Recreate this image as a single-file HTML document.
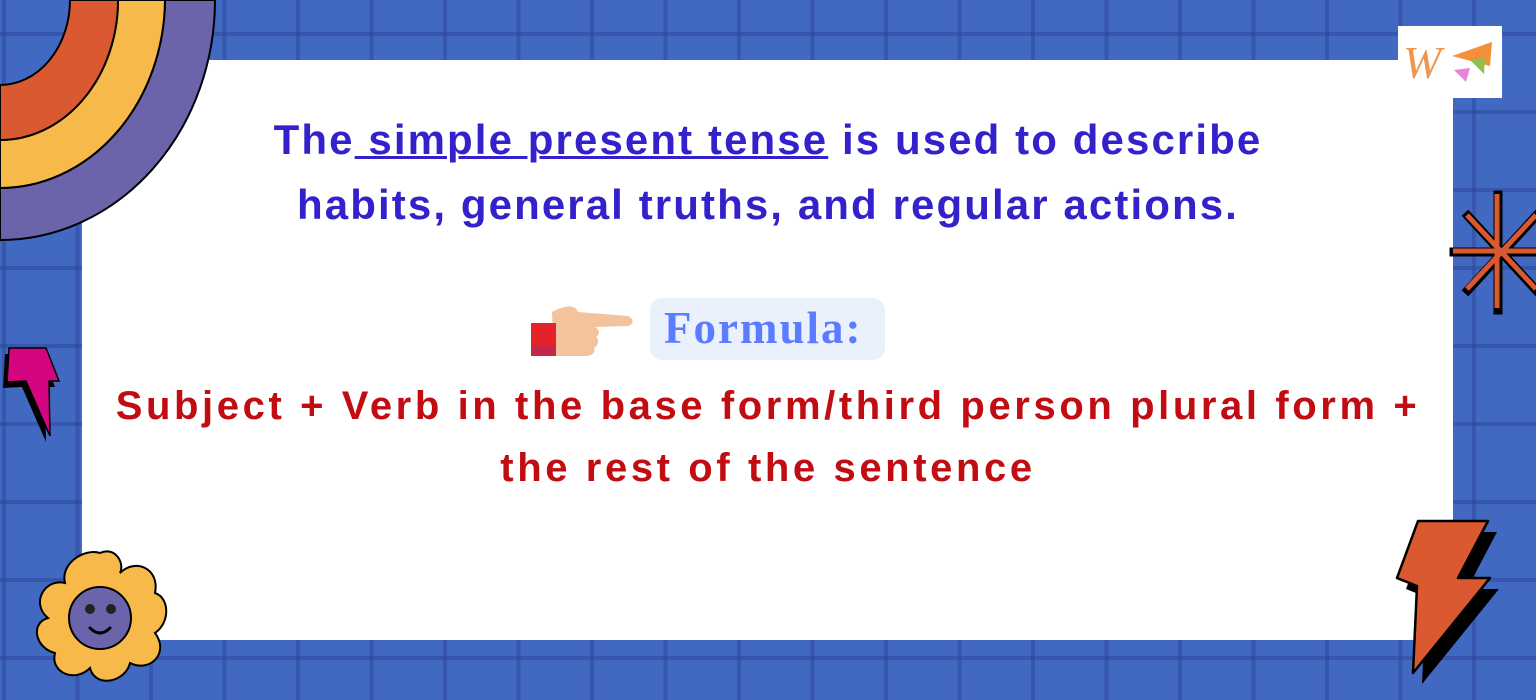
<!DOCTYPE html>
<html><head><meta charset="utf-8"><style>
html,body{margin:0;padding:0}
body{width:1536px;height:700px;position:relative;overflow:hidden;background:#4169c2;font-family:"Liberation Sans",sans-serif}
.grid{position:absolute;inset:0;background-image:linear-gradient(90deg,rgba(45,70,150,.5) 0 4px,transparent 4px),linear-gradient(rgba(45,70,150,.5) 0 4px,transparent 4px);background-size:73.5px 78px;background-position:2px 0,0 32px}
.card{position:absolute;left:82px;top:60px;width:1371px;height:580px;background:#fff}
.t{position:absolute;left:0;width:1536px;text-align:center;font-weight:bold;white-space:nowrap}
.blue{color:#3322cc;font-size:42px;letter-spacing:2.1px}
.red{color:#c10d12;font-size:40px;letter-spacing:3.6px}
</style></head><body>
<div class="grid"></div>
<div class="card"></div>
<svg style="position:absolute;left:0;top:0" width="230" height="245">
<path d="M0,240 A215,240 0 0 0 215,0 L165,0 A165,190 0 0 1 0,188Z" fill="#6c64aa" stroke="#000" stroke-width="2"/>
<path d="M0,188 A165,190 0 0 0 165,0 L118,0 A118,140 0 0 1 0,140Z" fill="#f6b94a" stroke="#000" stroke-width="2"/>
<path d="M0,140 A118,140 0 0 0 118,0 L70,0 A70,85 0 0 1 0,85Z" fill="#db5931" stroke="#000" stroke-width="2"/>
</svg>
<div style="position:absolute;left:1398px;top:26px;width:104px;height:72px;background:#fff"></div>
<div style="position:absolute;left:1403px;top:36px;font-family:'Liberation Serif',serif;font-style:italic;font-size:46px;color:#f0954a">W</div>
<svg style="position:absolute;left:1450px;top:38px" width="45" height="45"><path d="M2,18 L42,4 L40,28Z" fill="#f58f3a"/><path d="M20,22 L35,20 L34,36Z" fill="#8ec04f"/><path d="M4,32 L20,30 L16,44Z" fill="#e883d6"/></svg>
<svg style="position:absolute;left:1448px;top:190px" width="88" height="130">
<g stroke="#000" stroke-width="9" stroke-linecap="square"><line x1="50" y1="5" x2="50" y2="120"/><line x1="6" y1="62" x2="88" y2="62"/><line x1="20" y1="26" x2="88" y2="100"/><line x1="20" y1="100" x2="88" y2="26"/></g>
<g stroke="#db5931" stroke-width="5"><line x1="49" y1="4" x2="49" y2="118"/><line x1="5" y1="61" x2="88" y2="61"/><line x1="19" y1="25" x2="88" y2="99"/><line x1="19" y1="99" x2="88" y2="25"/></g>
</svg>
<svg style="position:absolute;left:0;top:0" width="1536" height="700">
<path d="M9,348 L46,348 L59,381 L49,381 L50,436 L26,381 L7,382Z" fill="#000" transform="translate(-4,6)"/>
<path d="M9,348 L46,348 L59,381 L49,381 L50,436 L26,381 L7,382Z" fill="#d3067f" stroke="#000" stroke-width="1.5"/>
<path d="M1418,521 L1488,521 L1458,578 L1490,578 L1413,673 L1417,586 L1397,578Z" fill="#000" transform="translate(9,11)"/>
<path d="M1418,521 L1488,521 L1458,578 L1490,578 L1413,673 L1417,586 L1397,578Z" fill="#db5931" stroke="#000" stroke-width="2.5" stroke-linejoin="round"/>
</svg>
<svg style="position:absolute;left:30px;top:548px" width="140" height="140">
<path d="M70,5 C85,-2 95,15 90,25 C105,10 130,20 125,45 C140,50 140,75 125,85 C140,105 120,125 100,115 C95,135 65,140 60,120 C45,135 20,125 25,105 C5,100 0,75 18,70 C0,55 15,30 35,35 C30,15 55,0 70,5Z" fill="#f6b94a" stroke="#000" stroke-width="2"/>
<circle cx="70" cy="70" r="31" fill="#6c64aa" stroke="#000" stroke-width="2"/>
<circle cx="60" cy="61" r="5" fill="#222"/><circle cx="81" cy="61" r="5" fill="#222"/>
<path d="M60,80 Q70,90 80,80" fill="none" stroke="#000" stroke-width="3" stroke-linecap="round"/>
</svg>
<div class="t blue" style="top:116px">The<span style="text-decoration:underline;text-decoration-thickness:3px"> simple present tense</span> is used to describe</div>
<div class="t blue" style="top:181px">habits, general truths, and regular actions.</div>
<svg style="position:absolute;left:530px;top:302px" width="105" height="55">
<path d="M22,10 C35,3 45,2 48,10 L98,14 C104,16 104,23 98,24 L65,25 C70,28 70,33 66,35 C70,38 68,44 64,46 C66,50 62,54 56,54 L24,54Z" fill="#f2c39d"/>
<rect x="1" y="21" width="25" height="33" fill="#e52229"/><rect x="1" y="44" width="25" height="10" fill="#c3274a"/>
</svg>
<div style="position:absolute;left:650px;top:298px;width:235px;height:62px;background:#ebf0fd;border-radius:12px"></div>
<div style="position:absolute;left:664px;top:302px;font-family:'Liberation Serif',serif;font-weight:bold;font-size:45px;letter-spacing:2px;color:#5b7cff">Formula:</div>
<div class="t red" style="top:384px">Subject + Verb in the base form/third person plural form +</div>
<div class="t red" style="top:446px">the rest of the sentence</div>
</body></html>
